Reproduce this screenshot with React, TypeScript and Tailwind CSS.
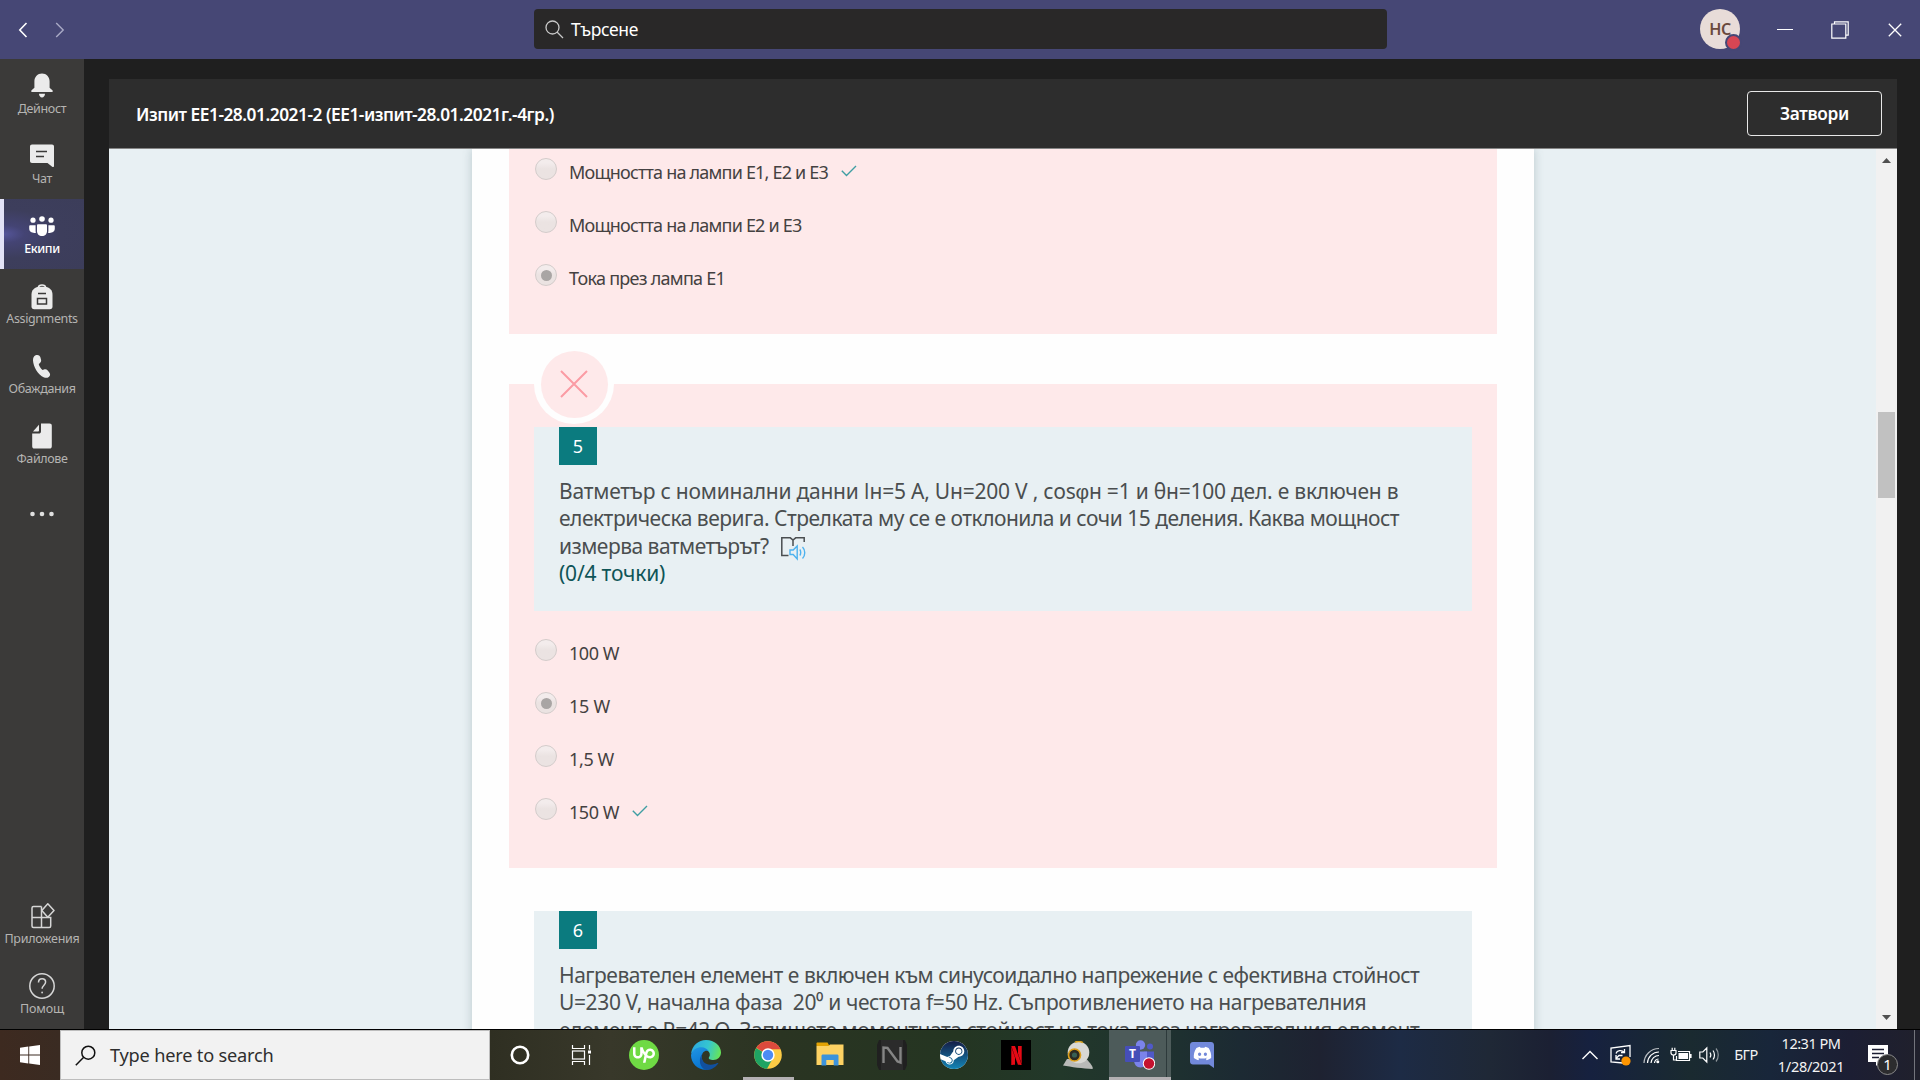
import { type ReactNode } from 'react';
import { FaDiscord, FaSteam } from 'react-icons/fa';
import { SiUpwork, SiNetflix } from 'react-icons/si';

function T({ c = '', children }: { c?: string; children: ReactNode }) {
  return <span className={'inline-block whitespace-pre ' + c}>{children}</span>;
}

/* ---------- Sidebar ---------- */

const BellIcon = () => (
  <svg width="24" height="28" viewBox="0 0 24 28" fill="#ebebeb">
    <path d="M12 1.500c-4.400 0-7.600 3.400-7.600 7.800v6.500L1.600 18.200c-.7.700-.4 1.900.7 1.900h19.400c1.100 0 1.400-1.200.7-1.900l-2.800-2.400V9.300c0-4.400-3.200-7.800-7.600-7.800zM9 21.800h6c0 2-1.300 3.700-3 3.700s-3-1.700-3-3.700z" />
  </svg>
);
const ChatIcon = () => (
  <svg width="26" height="28" viewBox="0 0 26 28">
    <path d="M3 2.500h20c1.200 0 2 .8 2 2V24c0 1-1 1.400-1.800.7L18.500 21H3c-1.200 0-2-.8-2-2V4.500c0-1.200.8-2 2-2z" fill="#ebebeb" />
    <path d="M7 9.500h11M7 14.500h8" stroke="#3b3a39" strokeWidth="1.600" />
  </svg>
);
const TeamsIcon = () => (
  <svg width="28" height="28" viewBox="0 0 28 28" fill="#fff">
    <circle cx="14" cy="7" r="2.800" />
    <circle cx="5" cy="8.200" r="2.600" />
    <circle cx="23" cy="8.200" r="2.600" />
    <path d="M9 13.500c0-.8.500-1.200 1.200-1.200h7.600c.7 0 1.200.4 1.200 1.200V19c0 3-2 5-5 5s-5-2-5-5z" />
    <path d="M1.200 14.500c0-.8.400-1.200 1.200-1.200h5.200V18.500c0 1 .1 1.600.4 2.300-3.400.8-6.800-.8-6.800-4.200zM26.800 14.500c0-.8-.4-1.200-1.200-1.200h-5.200V18.500c0 1-.1 1.600-.4 2.300 3.400.8 6.800-.8 6.800-4.200z" />
  </svg>
);
const BagIcon = () => (
  <svg width="24" height="28" viewBox="0 0 24 28">
    <path d="M8.300 5.500C8.800 2.300 15.200 2.300 15.700 5.500" fill="none" stroke="#ebebeb" strokeWidth="1.500" />
    <path d="M9 4.800h6c4.500.5 7.500 3.500 7.500 7.700v12c0 1.800-1 2.700-2.700 2.700H4.200c-1.700 0-2.700-.9-2.700-2.700v-12C1.500 8.300 4.500 5.300 9 4.800z" fill="#ebebeb" />
    <path d="M8 11.500h8" stroke="#3b3a39" strokeWidth="1.500" />
    <rect x="7.500" y="16.500" width="9" height="5.500" fill="none" stroke="#3b3a39" strokeWidth="1.500" />
  </svg>
);
const PhoneIcon = () => (
  <svg width="24" height="28" viewBox="0 0 24 28" fill="#ebebeb">
    <path d="M5.600 3.300c2-.9 4-.2 4.700 1.800l.7 2.500c.4 1.500 0 2.600-1.200 3.600L8.700 12c.6 2.400 2 4.500 3.800 6l1.500-.5c1.500-.4 2.700-.1 3.700 1l1.600 1.900c1.300 1.600 1 3.300-.5 4.500-1.300 1-2.900 1.200-4.700.5C7.700 22.900 3.300 14.500 3 8.500c-.1-2.600.8-4.300 2.600-5.200z" />
  </svg>
);
const FileIcon = () => (
  <svg width="24" height="28" viewBox="0 0 24 28" fill="#ebebeb">
    <path d="M11 1.500h8.500c1.500 0 2.300.8 2.300 2.300v20.400c0 1.500-.8 2.300-2.300 2.300H4.500c-1.500 0-2.300-.8-2.300-2.300V11.500h6.500c1.500 0 2.300-.8 2.300-2.300z" />
    <path d="M9 2.800v5.500c0 .8-.5 1.300-1.200 1.300H3z" />
  </svg>
);
const AppsIcon = () => (
  <svg width="26" height="28" viewBox="0 0 26 28" fill="none" stroke="#d6d6d6" strokeWidth="1.500">
    <path d="M12.500 4.500h-8C3.500 4.500 3 5 3 6v18c0 1 .5 1.500 1.500 1.500h15.700c1 0 1.500-.5 1.500-1.500v-8.500H3M12.500 4.500v21" />
    <path d="M18.800 1.800l6.200 6.700-6.200 6.700-6-6.700z" strokeLinejoin="round" />
  </svg>
);
const HelpIcon = () => (
  <svg width="28" height="28" viewBox="0 0 28 28" fill="none" stroke="#d6d6d6" strokeWidth="1.500">
    <circle cx="14" cy="14" r="12.200" />
    <path d="M10.500 10.500c0-2.300 1.500-3.700 3.600-3.700s3.500 1.400 3.500 3.300c0 3-3.500 3.200-3.500 6.700" />
    <circle cx="14.100" cy="20.500" r="0.900" fill="#d6d6d6" stroke="none" />
  </svg>
);

function NavItem({ icon, label, tracking, active = false }: { icon: ReactNode; label: string; tracking: string; active?: boolean }) {
  return (
    <div
      className={
        'flex h-[70px] w-[84px] shrink-0 flex-col items-center pt-[13px] ' +
        (active
          ? 'border-l-4 border-[#e2e2f6] bg-[radial-gradient(ellipse_at_left,#55559a_0%,#444474_18%,#3d3e5c_50%,#3c3d5a_100%)] pr-1 text-white'
          : 'text-[#b5b4b2]')
      }
    >
      <div className="flex h-7 items-center justify-center">{icon}</div>
      <div className={'mt-px flex h-4 items-center justify-center text-[12.500px] leading-4 ' + (active ? 'font-medium' : '')}>
        <T c={tracking}>{label}</T>
      </div>
    </div>
  );
}

/* ---------- Form ---------- */

function Option({ text, tracking, selected = false, correct = false }: { text: string; tracking: string; selected?: boolean; correct?: boolean }) {
  return (
    <div className="flex h-[53px] items-start">
      <span className="flex size-[22px] items-center justify-center rounded-full border border-[#d3cccb] bg-linear-to-b from-[#f3ecec] from-20% to-[#ebe3e2] to-50%">
        {selected && <span className="size-[11px] rounded-full bg-[#a9a5a4]" />}
      </span>
      <span className="mt-0.5 ml-3 flex h-6 items-center text-[18px] leading-6 text-[#444141]">
        <T c={tracking}>{text}</T>
        {correct && (
          <svg width="16" height="12" viewBox="0 0 16 12" className="-mt-0.5 ml-[13px]" fill="none" stroke="#3f9ea3" strokeWidth="1.400">
            <path d="M.8 5.800l4.700 4.700L15 1" />
          </svg>
        )}
      </span>
    </div>
  );
}

function Question({ n, children }: { n: string; children: ReactNode }) {
  return (
    <div className="h-[184px] w-[938px] bg-[#e8f0f3] pl-[25px]">
      <div className="flex size-[38px] items-center justify-center bg-[#0b7b7f] text-[18px] text-white">{n}</div>
      <div className="mt-[13px] flex flex-col text-[21px] leading-[27.300px] text-[#4a4e4f]">{children}</div>
    </div>
  );
}

const ReaderIcon = () => (
  <svg width="27" height="25" viewBox="0 0 27 25" fill="none" className="mt-[3px] ml-[11px]">
    <path d="M8.500 19.500H1.800V1.800h8.500l2.700 2.200 2.700-2.200h8.500V6M13 4v6" stroke="#4a4e50" strokeWidth="1.500" />
    <path d="M10 14h3.200l4-4v13l-4-4.500H10z" stroke="#4db2ef" strokeWidth="1.400" />
    <path d="M19.800 13.500c1.200 1.500 1.200 4.500 0 6M22.500 11c3 3 3 8.500 0 11.500" stroke="#4db2ef" strokeWidth="1.400" />
  </svg>
);

/* ---------- Taskbar ---------- */

const CortanaIcon = () => (
  <svg width="20" height="20" viewBox="0 0 20 20">
    <circle cx="10" cy="10" r="8.200" fill="none" stroke="#fff" strokeWidth="2.600" />
  </svg>
);
const TaskViewIcon = () => (
  <svg width="22" height="20" viewBox="0 0 22 20" fill="none" stroke="#fff" strokeWidth="1.200">
    <path d="M1.500 0v3.500h12V0M1.500 20v-3.500h12V20M18.500 0v4.500M18.500 10v10" />
    <rect x="1.500" y="6" width="12" height="8" />
    <path d="M17 5.500h3v3h-3z" fill="#fff" stroke="none" />
  </svg>
);
const EdgeIcon = () => (
  <svg width="30" height="30" viewBox="0 0 30 30">
    <defs>
      <linearGradient id="edgeTop" x1="0" y1="0.300" x2="1" y2="0.500">
        <stop offset="0" stopColor="#2ba7e0" />
        <stop offset="0.550" stopColor="#35c6d0" />
        <stop offset="1" stopColor="#66e45a" />
      </linearGradient>
      <linearGradient id="edgeLeft" x1="0" y1="0" x2="0.400" y2="1">
        <stop offset="0" stopColor="#2196e3" />
        <stop offset="1" stopColor="#0873cf" />
      </linearGradient>
    </defs>
    <path d="M0 14C1 5.500 7.500 0 15 0c8.500 0 15 5.800 15 12.500 0 4.500-3.500 7.500-7.500 7.500-3.500 0-5.500-1.200-4.500-2.700 1.500-2 1-5-1.500-6.800C11 6.500 3.500 9 0 14z" fill="url(#edgeTop)" />
    <path d="M0 15C1.500 9.500 6 7.300 10.500 7.300c3 0 6 1.700 7.500 4.200-3.500-2-7 .5-7.200 5C10.500 23 15 27.500 20 28.800 9.500 32.500 0 25 0 15z" fill="url(#edgeLeft)" />
    <path d="M11.500 13.500c-3 7 3.500 13.500 12.500 10.500 1.500-.5 2.500-1.300 3.500-1-2 3.500-6.500 7-12 7C9 29 6.500 19 11.500 13.500z" fill="#11509e" />
  </svg>
);
const ChromeIcon = () => (
  <svg width="28" height="28" viewBox="0 0 28 28">
    <circle cx="14" cy="14" r="13.800" fill="#fccb45" />
    <path d="M14 14L2.200 6.800A13.800 13.800 0 0 1 26.500 8.200H14z" fill="#dc4a3d" />
    <path d="M2.100 7A13.800 13.800 0 0 0 13 27.800l6-10.800-5-3z" fill="#1fa363" />
    <circle cx="14" cy="14" r="6.700" fill="#fff" />
    <circle cx="14" cy="14" r="5.200" fill="#4c8bf5" />
  </svg>
);
const ExplorerIcon = () => (
  <svg width="28" height="26" viewBox="0 0 28 26">
    <path d="M.5 1.500c0-.8.500-1 1-1h10l2 3.500H.5z" fill="#e2a203" />
    <path d="M.5 4h12l1.500-1.500h13.500V23H.5z" fill="#fdd263" />
    <path d="M5.500 23.500V14c0-1 .5-1.500 1.500-1.500h14c1 0 1.500.5 1.500 1.500v9.500h-4.800V18h-7.400v5.500z" fill="#3c93dc" />
  </svg>
);
const NexusIcon = () => (
  <svg width="30" height="30" viewBox="0 0 30 30">
    <path d="M2 0h26l2 5v20l-2 5H2l-2-5V5z" fill="#202020" />
    <path d="M4 0h22v30H4z" fill="#2b2b2b" />
    <path d="M6.500 23V7.500l4 .5 10 13.500 3 1V7" fill="none" stroke="#858585" strokeWidth="2.400" />
  </svg>
);
const WebcamIcon = () => (
  <svg width="30" height="28" viewBox="0 0 30 28">
    <path d="M4 18L0 24.500c8 1.500 20 3 29.500 3.500 1-2-1.500-5-6-10z" fill="#b9bab8" />
    <circle cx="15.500" cy="11.500" r="10.800" fill="#d8d8d4" />
    <path d="M12 1.200c3-1.300 6-.8 8 .5" stroke="#d8a21f" strokeWidth="1.500" fill="none" />
    <circle cx="11.500" cy="14" r="6" fill="#2c2a22" stroke="#dda01c" strokeWidth="1.700" />
    <circle cx="11.500" cy="14" r="2.600" fill="#375f54" />
  </svg>
);
const TeamsAppIcon = () => (
  <div className="relative h-[30px] w-[30px]">
    <svg width="30" height="30" viewBox="0 0 30 30">
      <circle cx="25" cy="6.500" r="3" fill="#5059c9" />
      <path d="M19 11.500h10V20c0 2.500-2 4.500-5 4.500z" fill="#5059c9" />
      <circle cx="15.500" cy="5" r="4.700" fill="#7b83eb" />
      <path d="M9 11.500h13V20c0 4.500-2.500 7.500-6.500 7.500S9 24.500 9 20z" fill="#7b83eb" />
      <rect x="0" y="6" width="15" height="16" rx="1" fill="#464eb8" />
      <circle cx="24" cy="23.500" r="6.200" fill="#fff" />
      <circle cx="24" cy="23.500" r="5.200" fill="#c4122f" />
    </svg>
    <span className="absolute top-[6px] left-0 w-[15px] text-center text-[12px] leading-4 font-bold text-white">T</span>
  </div>
);

function Slot({ children, state = '' }: { children: ReactNode; state?: string }) {
  return <div className={'flex h-full w-[62px] shrink-0 items-center justify-center ' + state}>{children}</div>;
}

function Taskbar() {
  return (
    <div className="flex h-[51px] shrink-0 border-t border-black bg-[linear-gradient(90deg,#3d2a20_0px,#3a2b22_60px,#2f2f22_490px,#38382a_610px,#2a3422_780px,#243522_960px,#22382a_1060px,#1e3030_1180px,#1c2a33_1240px,#1e2231_1320px,#1d2b45_1400px,#1f2836_1490px,#1b2033_1550px,#16213f_1590px,#1a2a30_1690px,#18263a_1770px,#1c1e33_1850px,#20202c_1920px)]">
      <div className="flex w-[60px] items-center justify-center">
        <svg width="20" height="20" viewBox="0 0 20 20" fill="#fff">
          <path d="M0 2.800l8.300-1.200v8H0zM9.200 1.500L20 0v9.600H9.200zM0 10.500h8.300v8L0 17.300zM9.200 10.500H20V20L9.200 18.600z" />
        </svg>
      </div>
      <div className="-mr-px flex w-[430px] items-center border border-[#bdbdbd] bg-[#f2f2f2] pl-3.5">
        <svg width="21" height="21" viewBox="0 0 21 21" fill="none" stroke="#111" strokeWidth="1.500">
          <circle cx="13.300" cy="7.700" r="6.500" />
          <path d="M8.700 12.300L.8 20.200" />
        </svg>
        <span className="mt-0.5 ml-3.5 flex h-6 items-center text-[18.200px] text-[#2e2e2e]">
          <T c="tracking-[-0.200px]">Type here to search</T>
        </span>
      </div>
      <Slot><CortanaIcon /></Slot>
      <Slot><TaskViewIcon /></Slot>
      <Slot>
        <div className="flex size-[30px] items-center justify-center rounded-full bg-[#6fda44]"><SiUpwork size={22} color="#fff" /></div>
      </Slot>
      <Slot><EdgeIcon /></Slot>
      <Slot state="relative"><ChromeIcon /><span className="absolute bottom-0 left-1.5 h-[3px] w-[51px] bg-[#b3b0b3]" /></Slot>
      <Slot><ExplorerIcon /></Slot>
      <Slot><NexusIcon /></Slot>
      <Slot>
        <div className="flex size-[28px] items-center justify-center overflow-hidden rounded-full bg-white">
          <svg width="0" height="0">
            <defs>
              <linearGradient id="steam" x1="0" y1="0" x2="0" y2="1">
                <stop offset="0" stopColor="#151b44" />
                <stop offset="1" stopColor="#1387b8" />
              </linearGradient>
            </defs>
          </svg>
          <FaSteam size={30} className="shrink-0 fill-[url(#steam)]" />
        </div>
      </Slot>
      <Slot>
        <div className="flex size-[30px] items-center justify-center bg-black"><SiNetflix size={19} color="#e50914" /></div>
      </Slot>
      <Slot><WebcamIcon /></Slot>
      <Slot state="relative border-b-[3px] border-[#b3b0b3] bg-[#4d5b5a]"><div className="mt-[3px]"><TeamsAppIcon /></div><span className="absolute top-0 right-1 h-[47px] w-px bg-[#2d3a3b]" /></Slot>
      <Slot>
        <div className="relative flex h-[26px] w-6 items-start justify-center">
          <svg width="24" height="26" viewBox="0 0 24 26" fill="#7289da"><path d="M3 0h18c1.700 0 3 1.300 3 3v23l-5-3.500H3c-1.700 0-3-1.300-3-3V3c0-1.700 1.300-3 3-3z" /></svg>
          <FaDiscord size={19} color="#fff" className="absolute top-[2px] left-[2.500px]" />
        </div>
      </Slot>
      <div className="ml-auto flex w-[338px] items-center">
        <svg width="16" height="10" viewBox="0 0 16 10" fill="none" stroke="#fff" strokeWidth="1.400"><path d="M.5 9L8 1.500 15.500 9" /></svg>
        <svg width="22" height="22" viewBox="0 0 22 22" fill="none" stroke="#fff" strokeWidth="1.300" className="ml-3">
          <path d="M13 19L1 18V4l19-2.500V13M6 9.500C7 6.500 11.500 5.500 14 8M14.500 5v3.500H11M12.500 11.500H9L6 14.500M6 11v4h4" />
          <circle cx="16" cy="17" r="4.600" fill="#ff9500" stroke="none" />
        </svg>
        <svg width="17" height="17" viewBox="0 0 17 17" fill="none" stroke="#fff" strokeWidth="1.200" className="ml-[11px]">
          <path d="M1 16A15 15 0 0 1 16 1.500" opacity="0.700" />
          <path d="M4.500 16A11.500 11.500 0 0 1 16 5M8 16a8 8 0 0 1 8-7.500M11.500 16a4.500 4.500 0 0 1 4-4" />
          <circle cx="14.800" cy="14.800" r="1.500" fill="#fff" stroke="none" />
        </svg>
        <svg width="22" height="16" viewBox="0 0 22 16" fill="none" stroke="#fff" strokeWidth="1.200" className="ml-2.5">
          <path d="M1 3.500h5v2.500c0 1.300-1 2-2.500 2S1 7.300 1 6zM2.200 3.500V.8M4.800 3.500V.8M3.500 8v5h2.500M8 4.500h11.500v9H6.500V9" />
          <path d="M8.500 6h9.500v6H8.500z" fill="#fff" stroke="none" />
          <path d="M20.800 7v4" strokeWidth="1.600" />
        </svg>
        <svg width="21" height="18" viewBox="0 0 21 18" fill="none" stroke="#fff" strokeWidth="1.200" className="ml-[7px]">
          <path d="M.8 6h3l4-4v14l-4-4h-3zM11 6.500c1 1.500 1 3.500 0 5M14 4.500c2 2.500 2 6.500 0 9" />
          <path d="M17 2.500c3 3.500 3 9.500 0 13" opacity="0.500" />
        </svg>
        <span className="ml-[14px] flex w-6 justify-center text-[14.500px] text-[#f4f4f4]"><T c="tracking-[-0.500px]">БГР</T></span>
        <div className="ml-[19px] flex w-[68px] flex-col items-center text-[14.500px] leading-[23px] text-[#f4f4f4]">
          <T c="tracking-[-0.500px]">12:31 PM</T>
          <T c="tracking-[-0.280px]">1/28/2021</T>
        </div>
        <div className="relative ml-[23px] h-[30px] w-[30px]">
          <svg width="20" height="22" viewBox="0 0 20 22" className="mt-[5px]">
            <path d="M0 0h20v17h-8l-4 4v-4H0z" fill="#fff" />
            <path d="M4 4.500h12M4 8.500h12M4 12.500h7" stroke="#1c1e33" strokeWidth="1.300" />
          </svg>
          <span className="absolute top-[14px] left-[9px] flex size-[21px] items-center justify-center rounded-full border border-[#8a8a8a] bg-[#2c2c2e] text-[15px] text-white">1</span>
        </div>
        <span className="mr-[5px] ml-auto h-[50px] w-px bg-[#73747c]" />
      </div>
    </div>
  );
}

export default function App() {
  return (
    <div className="flex h-[1080px] w-[1920px] flex-col overflow-hidden bg-[#1f1f1f] font-['Noto_Sans','Open_Sans',sans-serif]">
      <div className="flex h-[59px] shrink-0 items-center bg-[#464775]">
        <svg width="10" height="16" viewBox="0 0 10 16" fill="none" stroke="#fff" strokeWidth="1.600" className="ml-[18px]"><path d="M8.500 1L1.800 8l6.700 7" /></svg>
        <svg width="10" height="16" viewBox="0 0 10 16" fill="none" stroke="#a9aac6" strokeWidth="1.400" className="ml-[27px]"><path d="M1.200 1l7 7-7 7" /></svg>
        <div className="-mt-px ml-[469px] flex h-10 w-[853px] items-center rounded bg-[#292828] pl-[11px]">
          <svg width="19" height="19" viewBox="0 0 19 19" fill="none" stroke="#c8c8c8" strokeWidth="1.300"><circle cx="7.500" cy="7.500" r="6.500" /><path d="M12 12l6 6" /></svg>
          <span className="mt-px ml-[7px] flex text-[17.500px] text-white"><T c="tracking-[-0.370px]">Търсене</T></span>
        </div>
        <div className="relative -mt-px ml-[313px] flex size-10 items-center justify-center rounded-full bg-[#e8dcd8] text-[16px] font-semibold text-[#6b4a3d]">
          <T c="tracking-[-0.400px]">НС</T>
          <span className="absolute right-[-2px] bottom-[-2px] size-[17px] rounded-full border-2 border-[#464775] bg-[#d74654]" />
        </div>
        <span className="-mt-px ml-[37px] h-px w-4 bg-white" />
        <svg width="18" height="18" viewBox="0 0 18 18" fill="none" stroke="#fff" strokeWidth="1.200" className="ml-[38px]"><path d="M3.500 3V.8h13.700v13.400H15M.8 3h14v14.200H.8z" /></svg>
        <svg width="14" height="14" viewBox="0 0 14 14" stroke="#fff" strokeWidth="1.300" className="ml-[39px]"><path d="M.8.800l12.400 12.400M13.200.8L.8 13.200" /></svg>
      </div>

      <div className="flex min-h-0 flex-1">
        <nav className="flex w-[84px] shrink-0 flex-col bg-[#3b3a39]">
          <NavItem icon={<BellIcon />} label="Дейност" tracking="tracking-[-0.340px]" />
          <NavItem icon={<ChatIcon />} label="Чат" tracking="tracking-[-0.350px]" />
          <NavItem icon={<TeamsIcon />} label="Екипи" tracking="tracking-[-0.420px]" active />
          <NavItem icon={<BagIcon />} label="Assignments" tracking="tracking-[-0.390px]" />
          <NavItem icon={<PhoneIcon />} label="Обаждания" tracking="tracking-[-0.380px]" />
          <NavItem icon={<FileIcon />} label="Файлове" tracking="tracking-[-0.370px]" />
          <svg width="26" height="6" viewBox="0 0 26 6" fill="#e0e0e0" className="mt-[32px] ml-[29px]"><circle cx="3.500" cy="3" r="2.300" /><circle cx="13" cy="3" r="2.300" /><circle cx="22.500" cy="3" r="2.300" /></svg>
          <div className="mt-auto flex flex-col">
            <NavItem icon={<AppsIcon />} label="Приложения" tracking="tracking-[-0.280px]" />
            <NavItem icon={<HelpIcon />} label="Помощ" tracking="tracking-[-0.130px]" />
          </div>
        </nav>

        <main className="mt-5 ml-[25px] flex w-[1788px] flex-col">
          <header className="flex h-[70px] shrink-0 items-center border-b border-[#858585] bg-[#2d2d2d] pr-[15px] pl-[27px] font-semibold text-white">
            <div className="mt-0.5 flex text-[17.300px]"><T c="tracking-[-0.467px]">Изпит ЕЕ1-28.01.2021-2 (ЕЕ1-изпит-28.01.2021г.-4гр.)</T></div>
            <div className="ml-auto flex h-[45px] w-[135px] items-center justify-center rounded border border-[#e8e8e8] pt-px text-[17.300px]"><T c="tracking-[-0.320px]">Затвори</T></div>
          </header>
          <div className="flex min-h-0 flex-1 overflow-hidden bg-[#e8f0f3]">
            <section className="ml-[363px] flex h-[890px] w-[1062px] flex-col bg-[#fefefe] px-[37px] shadow-[0_0_9px_rgba(80,110,120,0.3)]">
              <div className="h-[185px] shrink-0 bg-[#fee9ea] pt-[9px] pl-[26px]">
                <Option text="Мощността на лампи Е1, Е2 и Е3" tracking="tracking-[-0.800px]" correct />
                <Option text="Мощността на лампи Е2 и Е3" tracking="tracking-[-0.800px]" />
                <Option text="Тока през лампа Е1" tracking="tracking-[-0.740px]" selected />
              </div>
              <div className="relative mt-[50px] h-[484px] shrink-0 bg-[#fee9ea] px-[25px] pt-[43px]">
                <div className="absolute top-[-40px] left-[25px] flex size-20 items-center justify-center rounded-full bg-[#fefefe]">
                  <div className="flex size-[67px] items-center justify-center rounded-full bg-[#fee9ea]">
                    <svg width="28" height="28" viewBox="0 0 28 28" stroke="#fb9ba4" strokeWidth="2"><path d="M1 1l26 26M27 1L1 27" /></svg>
                  </div>
                </div>
                <Question n="5">
                  <div>
                    <T c="tracking-[-0.220px]">
                      Ватметър с номинални данни <span className="font-['Open_Sans']">I</span>н=5 А, Uн=200 V , cos<span className="font-['Liberation_Sans']">φ</span>н =1 и θн=100 дел. е включен в
                    </T>
                  </div>
                  <div><T c="tracking-[-0.500px]">електрическа верига. Стрелката му се е отклонила и сочи 15 деления. Каква мощност</T></div>
                  <div className="flex h-[27.300px]"><T c="tracking-[-0.520px]">измерва ватметърът?</T><ReaderIcon /></div>
                  <div className="text-[#0f5557]"><T c="tracking-[-0.200px]">(0/4 точки)</T></div>
                </Question>
                <div className="mt-7 pl-px">
                  <Option text="100 W" tracking="tracking-[-0.450px]" />
                  <Option text="15 W" tracking="tracking-[-0.250px]" selected />
                  <Option text="1,5 W" tracking="tracking-[-0.370px]" />
                  <Option text="150 W" tracking="tracking-[-0.450px]" correct />
                </div>
              </div>
              <div className="mt-[43px] px-[25px]">
                <Question n="6">
                  <div><T c="tracking-[-0.475px]">Нагревателен елемент е включен към синусоидално напрежение с ефективна стойност</T></div>
                  <div><T c="tracking-[-0.375px]">U=230 V, начална фаза  20⁰ и честота f=50 Hz. Съпротивлението на нагревателния</T></div>
                  <div><T c="tracking-[-0.475px]">елемент е R=42 Ω. Запишете моментната стойност на тока през нагревателния елемент</T></div>
                </Question>
              </div>
            </section>
            <div className="ml-auto flex w-[21px] flex-col items-center bg-[#f1f1f1]">
              <svg width="9" height="5" viewBox="0 0 9 5" fill="#505050" className="mt-[9px]"><path d="M4.500 0L9 5H0z" /></svg>
              <div className="mt-[249px] h-[86px] w-[17px] bg-[#c1c1c1]" />
              <svg width="9" height="5" viewBox="0 0 9 5" fill="#505050" className="mt-auto mb-[9px]"><path d="M0 0h9L4.500 5z" /></svg>
            </div>
          </div>
        </main>
      </div>
      <Taskbar />
    </div>
  );
}
